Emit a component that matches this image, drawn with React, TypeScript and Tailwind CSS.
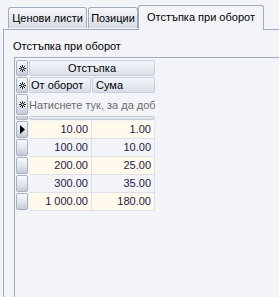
const rows = [
  ['10.00', '1.00'],
  ['100.00', '10.00'],
  ['200.00', '25.00'],
  ['300.00', '35.00'],
  ['1 000.00', '180.00'],
];

function Star() {
  return (
    <svg width="7" height="7" viewBox="0 0 7 7" className="block">
      <g stroke="#222" strokeWidth="1">
        <line x1="3.5" y1="0" x2="3.5" y2="7" />
        <line x1="0" y1="3.5" x2="7" y2="3.5" />
        <line x1="1" y1="1" x2="6" y2="6" />
        <line x1="6" y1="1" x2="1" y2="6" />
      </g>
      <circle cx="3.5" cy="3.5" r="1" fill="#fff" />
    </svg>
  );
}

function Indicator({ children, h }: { children?: React.ReactNode; h: string }) {
  return (
    <div
      className={`w-[12px] ${h} shrink-0 rounded-[2px] border border-[#a7b1c1] bg-gradient-to-b from-[#f7f8fb] via-[#e3e7ee] to-[#c3cbd8] flex items-center justify-center`}
    >
      {children}
    </div>
  );
}

export default function App() {
  return (
    <div className="w-[279px] h-[297px] bg-[#f3f4f7] flex flex-col overflow-hidden text-[11px] text-black font-['Liberation_Sans',Arial,sans-serif]">
      {/* tab strip */}
      <div className="h-[29px] flex items-end pl-[8px] shrink-0 relative z-10">
        <div className="h-[21px] w-[79px] mr-[1px] border border-b-0 border-[#a0acbd] rounded-t-[3px] bg-gradient-to-b from-[#f6f7fa] to-[#d6dce6] flex items-center justify-center pt-[1px] mb-[1px]">
          Ценови листи
        </div>
        <div className="h-[21px] w-[50px] border border-b-0 border-[#a0acbd] rounded-t-[3px] bg-gradient-to-b from-[#f6f7fa] to-[#d6dce6] flex items-center justify-center pt-[1px] mb-[1px]">
          Позиции
        </div>
        <div className="h-[25px] w-[126px] -mb-px border border-b-0 border-[#a0acbd] rounded-t-[3px] bg-[#f3f4f7] flex items-center justify-center pb-[1px]">
          Отстъпка при оборот
        </div>
      </div>

      {/* tab page */}
      <div className="ml-[3px] flex-1 border-l border-t border-[#a0acbd] flex flex-col">
        <div className="pl-[9px] pt-[10px] h-[27px] leading-[13px]">Отстъпка при оборот</div>

        <div className="ml-[10px] flex-1 border-l border-t border-[#a0acbd] pl-[1px] pt-[2px]">
          {/* band row */}
          <div className="flex h-[17px] gap-[1px]">
            <Indicator h="h-[16px]">
              <Star />
            </Indicator>
            <div className="w-[126px] h-[16px] rounded-[2px] border border-[#c6ced9] bg-gradient-to-b from-[#f4f6f9] to-[#d9dfe8] flex items-center justify-center">
              Отстъпка
            </div>
          </div>
          {/* column headers */}
          <div className="flex h-[16px] gap-[1px]">
            <Indicator h="h-[16px]">
              <Star />
            </Indicator>
            <div className="w-[62px] h-[16px] rounded-[2px] border border-[#c6ced9] bg-gradient-to-b from-[#f4f6f9] to-[#d9dfe8] flex items-center pl-[1px]">
              От оборот
            </div>
            <div className="w-[63px] h-[16px] rounded-[2px] border border-[#c6ced9] bg-gradient-to-b from-[#f4f6f9] to-[#d9dfe8] flex items-center pl-[3px]">
              Сума
            </div>
          </div>
          {/* new item row */}
          <div className="flex h-[21px] gap-[1px] mt-[1px]">
            <Indicator h="h-[21px]">
              <Star />
            </Indicator>
            <div className="w-[126px] overflow-hidden whitespace-nowrap text-[#6d6d6d] pt-[3px]">
              Натиснете тук, за да добавите нов ред
            </div>
          </div>
          {/* separator */}
          <div className="flex h-[5px] mt-[1px] gap-[1px]">
            <div className="w-[12px] h-[4px] rounded-b-[2px] border border-t-0 border-[#a7b1c1] bg-[#c9d0db]" />
            <div className="w-[126px] h-[4px] rounded-[2px] border border-[#c3cad6] bg-gradient-to-b from-[#f3f5f8] to-[#d4dae4]" />
          </div>
          {/* data rows */}
          <div className="flex flex-col">
            {rows.map((r, i) => (
              <div key={i} className="flex h-[18px]">
                <div className="w-[12px] mr-[1px] shrink-0">
                  <Indicator h="h-[17px]">
                    {i === 0 && (
                      <svg width="5" height="9" viewBox="0 0 5 9" className="block">
                        <polygon points="0,0 5,4.5 0,9" fill="#000" />
                      </svg>
                    )}
                  </Indicator>
                </div>
                <div
                  className={`w-[63px] border-r border-b border-[#dde2ea] text-right pr-[3px] leading-[17px] text-[#1b1b48] ${
                    i % 2 === 0 ? 'bg-[#fff9ec]' : 'bg-[#f3f4f7]'
                  }`}
                >
                  {r[0]}
                </div>
                <div
                  className={`w-[63px] border-r border-b border-[#dde2ea] text-right pr-[3px] leading-[17px] text-[#1b1b48] ${
                    i % 2 === 0 ? 'bg-[#fff9ec]' : 'bg-[#f3f4f7]'
                  }`}
                >
                  {r[1]}
                </div>
              </div>
            ))}
          </div>
        </div>
      </div>
    </div>
  );
}
